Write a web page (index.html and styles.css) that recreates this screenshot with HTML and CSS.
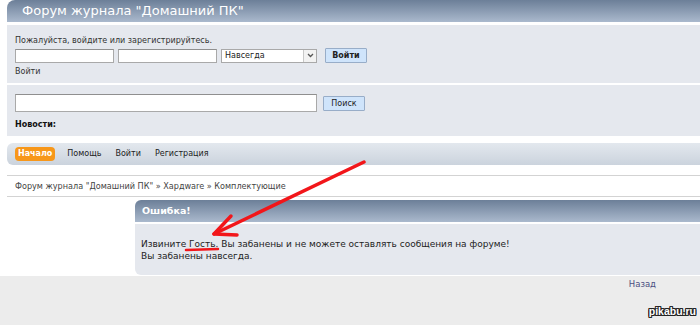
FILE: index.html
```html
<!DOCTYPE html>
<html lang="ru">
<head>
    <meta charset="UTF-8">
    <title>Форум журнала "Домашний ПК"</title>
    <link rel="stylesheet" href="styles.css">
</head>
<body>

    <div class="main">
        <div class="header">
            <h1 class="forum-title">Форум журнала "Домашний ПК"</h1>
        </div>

        <div class="panel user-panel">
            <p class="greeting">Пожалуйста, войдите или зарегистрируйтесь.</p>
            <div class="login-row">
                <input class="field short" type="text">
                <input class="field short" type="password">
                <div class="select">
                    <span class="select-value">Навсегда</span>
                    <span class="select-arrow">
                        <svg width="7" height="5" viewBox="0 0 7 5"><path d="M1 1 L3.5 3.5 L6 1" fill="none" stroke="#555" stroke-width="1.3"/></svg>
                    </span>
                </div>
                <button class="btn btn-login">Войти</button>
            </div>
            <a class="small-link" href="#">Войти</a>
        </div>

        <div class="panel search-panel">
            <div class="search-row">
                <input class="field long" type="text">
                <button class="btn btn-search">Поиск</button>
            </div>
            <p class="news">Новости:</p>
        </div>

        <div class="menu">
            <a class="menu-item active" href="#">Начало</a>
            <a class="menu-item" href="#">Помощь</a>
            <a class="menu-item" href="#">Войти</a>
            <a class="menu-item" href="#">Регистрация</a>
        </div>

        <div class="crumbs">
            <a href="#">Форум журнала "Домашний ПК"</a> » <a href="#">Хардware</a> » <a href="#">Комплектующие</a>
        </div>

        <div class="error-box">
            <div class="error-head">Ошибка!</div>
            <div class="error-body">
                Извините Гость. Вы забанены и не можете оставлять сообщения на форуме!<br>
                Вы забанены навсегда.
            </div>
        </div>
    </div>

    <div class="footer">
        <a class="back" href="#">Назад</a>
    </div>

    <!-- пометки поверх скриншота -->
    <svg class="marks" width="700" height="325" viewBox="0 0 700 325">
        <g stroke="#f2161a" stroke-linecap="round" fill="none">
            <path d="M364 162 L214 234" stroke-width="3.5"/>
            <path d="M231 216 L214 234 L237 235" stroke-width="3.5" stroke-linejoin="round"/>
            <path d="M186 250 L218 249" stroke-width="2.5"/>
        </g>
    </svg>

    <div class="watermark">pikabu.ru</div>

</body>
</html>
```

FILE: styles.css
```css
html, body {
    margin: 0;
    height: 100%;
}

body {
    background-color: #ececec;
    font-family: 'DejaVu Sans', Verdana, sans-serif;
    color: #333;
    overflow: hidden;
    position: relative;
}

a {
    color: inherit;
    text-decoration: none;
}

p {
    margin: 0;
}

.main {
    background-color: #fff;
    padding-left: 7px;
    padding-bottom: 1px;
}

.header {
    height: 22px;
    border-radius: 8px 0 0 0;
    background: linear-gradient(#6c7f98, #aab9cd);
}

.forum-title {
    margin: 0;
    padding-left: 15px;
    font-size: 13px;
    font-weight: normal;
    line-height: 22px;
    color: #fff;
}

.panel {
    background-color: #e5e8ee;
    padding: 0 8px;
}

.user-panel {
    margin-top: 3px;
    padding-top: 10px;
    padding-bottom: 6px;
}

.greeting,
.small-link {
    font-size: 8px;
    line-height: 11px;
    color: #333;
}

.small-link {
    display: block;
    margin-top: 3px;
}

.login-row {
    display: flex;
    align-items: center;
    margin-top: 2px;
}

.field {
    box-sizing: border-box;
    border: 1px solid #a9a9a9;
    border-top-color: #8f8f8f;
    background-color: #fff;
    margin: 0;
    padding: 0;
}

.field.short {
    width: 99px;
    height: 14px;
    margin-right: 4px;
}

.field.long {
    width: 302px;
    height: 18px;
}

.select {
    box-sizing: border-box;
    width: 96px;
    height: 14px;
    border: 1px solid #a9a9a9;
    background-color: #fff;
    display: flex;
    align-items: center;
    justify-content: space-between;
    font-size: 8px;
    color: #222;
    padding-left: 3px;
}

.select-arrow {
    box-sizing: border-box;
    width: 13px;
    height: 12px;
    border-left: 1px solid #c8c8c8;
    background-color: #f2f2f2;
    display: flex;
    align-items: center;
    justify-content: center;
}

.btn {
    box-sizing: border-box;
    height: 15px;
    padding: 0;
    font-family: 'DejaVu Sans', Verdana, sans-serif;
    font-size: 8px;
    color: #222;
    background-color: #cfe4fb;
    border: 1px solid #98adc8;
    border-radius: 1px;
    cursor: pointer;
}

.btn-login {
    width: 42px;
    margin-left: 8px;
    font-weight: bold;
}

.search-panel {
    margin-top: 2px;
    padding-top: 9px;
    padding-bottom: 6px;
}

.search-row {
    display: flex;
    align-items: center;
}

.btn-search {
    width: 42px;
    margin-left: 6px;
}

.news {
    margin-top: 7px;
    font-size: 8px;
    line-height: 11px;
    font-weight: bold;
    color: #111;
}

.menu {
    margin-top: 7px;
    height: 22px;
    border-radius: 6px 0 0 6px;
    background: linear-gradient(#e3e8ee, #cbd3dd);
    display: flex;
    align-items: center;
    padding-left: 8px;
    gap: 14px;
}

.menu-item {
    font-size: 8px;
    line-height: 14px;
    color: #222;
}

.menu-item.active {
    background-color: #f7971a;
    color: #fff;
    font-weight: bold;
    padding: 0 3px;
    border-radius: 4px;
    margin-right: -2px;
}

.crumbs {
    margin-top: 10px;
    border-top: 1px solid #d3d3d3;
    border-bottom: 1px solid #d3d3d3;
    padding-left: 8px;
    font-size: 8.1px;
    line-height: 20px;
    color: #444;
}

.error-box {
    margin: 3px 0 0 128px;
}

.error-head {
    height: 22px;
    border-radius: 6px 0 0 0;
    background: linear-gradient(#6c7f98, #aab9cd);
    color: #fff;
    font-size: 9.5px;
    font-weight: bold;
    line-height: 22px;
    padding-left: 7px;
}

.error-body {
    margin-top: 2px;
    background-color: #e5e8ee;
    border-radius: 0 0 0 6px;
    padding: 15px 6px 13px;
    font-size: 9px;
    line-height: 11.5px;
    color: #222;
}

.footer {
    text-align: right;
    padding-right: 44px;
    padding-top: 2px;
    font-size: 8.5px;
    line-height: 12px;
}

.back {
    color: #4b4f82;
}

.marks {
    position: absolute;
    top: 0;
    left: 0;
    pointer-events: none;
}

.watermark {
    position: absolute;
    right: 4px;
    top: 305px;
    font-family: 'Liberation Sans', Arial, sans-serif;
    font-size: 10.5px;
    font-weight: bold;
    color: #fff;
    text-shadow: 1px 0 0 #222, -1px 0 0 #222, 0 1px 0 #222, 0 -1px 0 #222,
                 1px 1px 0 #222, -1px -1px 0 #222, 1px -1px 0 #222, -1px 1px 0 #222;
}
```
